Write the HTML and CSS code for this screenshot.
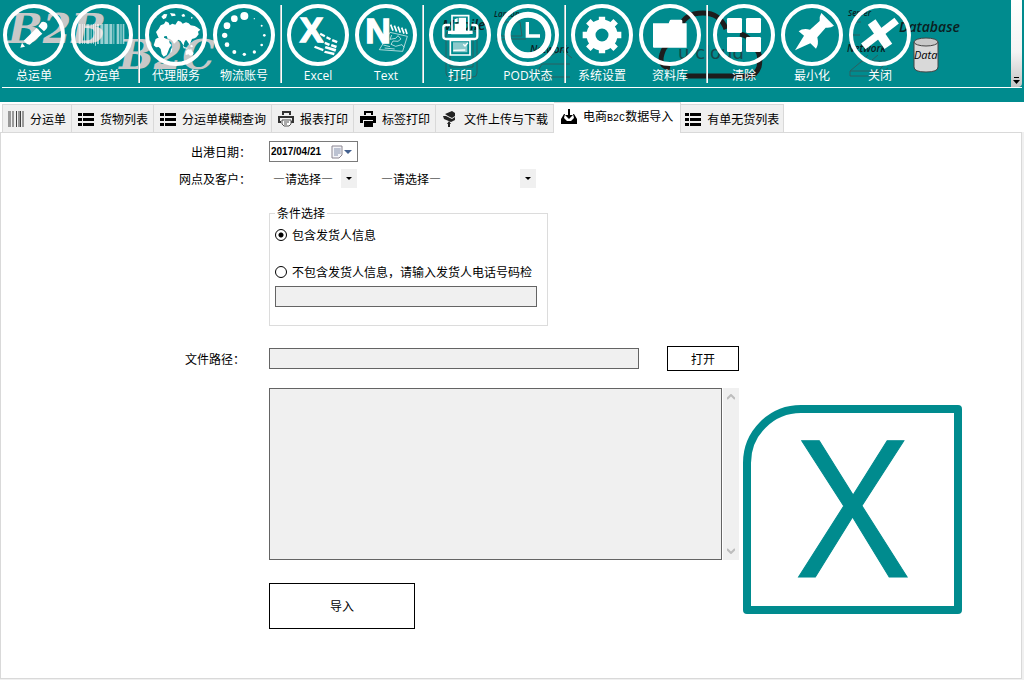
FILE: index.html
```html
<!DOCTYPE html>
<html lang="zh-CN">
  <head>
    <title>电商B2C数据导入</title>
    <meta charset="utf-8">
    <meta name="viewport" content="width=device-width, initial-scale=1">
    <link rel="stylesheet" href="styles.css">
  </head>
  <body>
    <header class="header">
      <!-- Decoration behind the buttons -->
      <svg class="backdrop" width="1024" height="88" viewBox="0 0 1024 88" aria-hidden="true">
        <g class="b2b">
          <text x="8" y="43">B2B</text>
          <text x="119" y="69">B2C</text>
        </g>
        <g class="sketch">
          <path d="M446 35q0-4 4-4h24q3 0 3 4v38q0 4-4 4h-23q-4 0-4-4zM450 39h23v28h-23z" />
          <path d="M500 22h20l2 14h-24zM496 39h30M548 57l14-7 10 8M536 74l6-10h28M540 77h30" />
          <path d="M853 22h8M852 35h8M860 63l8-8M872 60l6-5M850 71l12-10h26l-10 10zM850 71v5h28v-5M878 76l10-8" />
        </g>
        <g class="hand">
          <text class="hand-md" x="442" y="30">Mobile</text>
          <text class="hand-xs" x="494" y="17">Laptop</text>
          <text class="hand-sm" x="530" y="53">Network</text>
          <text class="hand-xs" x="848" y="16">Server</text>
          <text class="hand-sm" x="847" y="52">Network</text>
          <text class="hand-md" x="899" y="32">Database</text>
        </g>
        <path class="cloud" d="M686 76h62q8 0 11-9 3-14-5-20M740 34q7 1 10 7M670 68q-12-2-8-14 2-8 8-10M680 28q4-15 23-15 17 0 23 16" />
        <text class="cloud-text" x="678" y="59">u cloud</text>
        <path d="M914 42v25q0 5 12 5t12-5v-25z" fill="#d9d9d9" stroke="#444" />
        <ellipse cx="926" cy="42" rx="12" ry="4" fill="#c9c9c9" stroke="#444" />
        <text class="hand-data" x="914" y="59">Data</text>
      </svg>

      <nav class="toolbar">
        <button class="tool" type="button">
          <svg viewBox="21 24 162 162"><path d="M61 143l5-15 9 12zM71 122l39-38 17 17-38 33-8-2zM115 79l10-13q11-2 15 4 5 10-1 17l-7 7z" /></svg>
          <span>总运单</span>
        </button>
        <button class="tool" type="button">
          <svg viewBox="225 24 162 162"><path opacity=".6" d="M236 72h6v60h-6zM246 72h3v60h-3zM252 72h3v60h-3zM259 72h9v60h-9zM272 72h3v60h-3zM279 72h3v60h-3zM285 72h3v65h-3zM291 72h6v60h-6zM301 72h9v60h-9zM313 72h12v60h-12zM328 72h9v60h-9zM340 72h3v60h-3zM350 72h8v60h-8zM361 72h4v60h-4zM368 72h5v60h-5z" /></svg>
          <span>分运单</span>
        </button>
        <span class="divider"></span>
        <button class="tool" type="button">
          <svg viewBox="447 24 162 162"><path d="M484 50l8-8 10 1-4 11-8 4zM510 39l15 2 2 6-12 2zM462 52l8-5-2 7zM544 45l8-4 4 8-8 2zM573 50l6 3-5 4zM468 96l8-10 6-10 10-4 5-8 9 4 3 8 8-5 9 3 8-12 9 3 5 6 10-4 8 3 6 6 12 2 7 4 10 7-7 6 2 8-7 9-5 3-8 2-4 10-3 8-8-12-3-4-5 8-2 10-9-14-7-4-7 7-6 5-5-9-7-5-7-1-3-8-7 1-2 8-6-3-3 5-5-3zM467 117l10-5 12-1 9 5 9 5 2 9 6 5-7 10-4 10-4 10-9 5-6-8-3-15-6-6-8 1-7-6zM513 147l4-3-2 12-4 3zM557 154l7-6 7 1 2-4 3 8 5 6-3 7-8 1-4-4-9 2zM548 136l6 6 8 1v3l-11-1zM570 137l6-3 3 6-6 2zM584 166l6 3-5 4zM582 108l3-9 3 6-3 7z" /></svg>
          <span>代理服务</span>
        </button>
        <button class="tool" type="button">
          <svg viewBox="651 24 162 162">
            <circle cx="733" cy="48" r="12" /><circle cx="703" cy="56" r="10" /><circle cx="681" cy="77" r="10" />
            <circle cx="674" cy="106" r="8" /><circle cx="681" cy="134" r="7" /><circle cx="703" cy="156" r="6" />
            <circle cx="733" cy="163" r="5" /><circle cx="763" cy="156" r="5" /><circle cx="785" cy="135" r="4" />
            <circle cx="793" cy="106" r="4" /><circle cx="785" cy="77" r="3" /><circle cx="763" cy="56" r="2" />
          </svg>
          <span>物流账号</span>
        </button>
        <span class="divider"></span>
        <button class="tool" type="button">
          <svg viewBox="33 24 162 162">
            <text class="icon-letter" x="59" y="126">X</text>
            <path d="M122 98l14 8-3 6-14-8zM141 109l12 6-3 6-12-6zM158 117l15 6-3 7-15-6zM116 116l14 7-3 7-14-7zM136 125l14 6-3 7-14-6zM155 132l16 5-3 8-16-6zM105 137l26 10-2 7-27-11zM137 138l32 9-3 8-32-10zM135 152l29 6-2 8-30-8z" />
          </svg>
          <span>Excel</span>
        </button>
        <button class="tool" type="button">
          <svg viewBox="237 24 162 162">
            <text class="icon-letter" x="256" y="130">N</text>
            <path class="line" d="M332 74l7 18M343 77l7 18M354 80l7 18M365 83l7 18M376 86l5 16" stroke-width="5" />
            <path class="line" d="M330 97l52 12-14 45-70-5zM335 105l-5 13 17-3 7-8 9 10-9 7-15-1-6 10 14 6 19-5 6 8M310 135l20 5M314 144l30 3" stroke-width="2" />
          </svg>
          <span>Text</span>
        </button>
        <span class="divider"></span>
        <button class="tool" type="button">
          <svg viewBox="459 24 162 162">
            <path class="line" d="M510 75h-12q-8 0-8 8v26q0 8 8 8h86q8 0 8-8v-26q0-8-8-8h-10" stroke-width="7" />
            <path class="line" d="M516 100v-53h50v53z" stroke-width="5" />
            <path d="M524 58l9-4v12h-9zM536 53h22v44h-34v-26h12zM504 92h74v10h-74z" />
            <path class="line" d="M511 121v44h59v-44z" stroke-width="5" />
            <path d="M519 127h43v30h-43z" opacity=".55" />
            <path class="line" d="M550 133l5 5 9-10M520 151l36-1" stroke-width="4" />
          </svg>
          <span>打印</span>
        </button>
        <button class="tool" type="button">
          <svg viewBox="663 24 162 162">
            <circle class="line" cx="744" cy="105" r="61" stroke-width="18" />
            <path class="line" d="M742 66v42h38" stroke-width="10" />
          </svg>
          <span>POD状态</span>
        </button>
        <span class="divider"></span>
        <button class="tool" type="button">
          <svg viewBox="45 24 162 162">
            <circle class="line" cx="126" cy="105" r="33" stroke-width="27" />
            <path class="line" d="M126 50v16M126 144v16M68 105h18M166 105h18M85 64l14 14M153 132l14 14M167 64l-14 14M99 132l-14 14" stroke-width="19" />
          </svg>
          <span>系统设置</span>
        </button>
        <button class="tool" type="button">
          <svg viewBox="249 24 162 162"><path d="M279 70h47l3-8q1-3 4-3h30q4 0 4 4v7h13v73h-98q-3 0-3-3z" /></svg>
          <span>资料库</span>
        </button>
        <span class="divider"></span>
        <button class="tool" type="button">
          <svg viewBox="471 24 162 162">
            <rect x="501" y="54" width="45" height="45" rx="4" /><rect x="558" y="54" width="45" height="45" rx="4" />
            <rect x="501" y="111" width="45" height="45" rx="4" /><rect x="558" y="111" width="45" height="45" rx="4" />
          </svg>
          <span>清除</span>
        </button>
        <button class="tool" type="button">
          <svg viewBox="15 24 162 162"><path d="M45 151l27-44-16-13q12-10 34-5l29-26q-2-12 5-24l38 38q-10 8-25 6l-25 29q5 22-4 34l-17-16z" /></svg>
          <span>最小化</span>
        </button>
        <button class="tool" type="button">
          <svg viewBox="219 24 162 162">
            <path class="line" d="M250 139l100-77" stroke-width="22" />
            <path class="line" d="M275 66l50 73" stroke-width="28" />
          </svg>
          <span>关闭</span>
        </button>
        <button class="more" type="button" aria-label="更多">
          <svg width="7" height="7" viewBox="0 0 7 7"><path d="M1 0h5v1h-5zM0 3h7l-3.500 4z" /></svg>
        </button>
      </nav>
    </header>

    <nav class="tabs">
      <a class="tab" href="#">
        <svg viewBox="0 0 16 16"><path fill="#999" d="M0 0h3v16h-3zM4 0h2v16h-2zM10 0h2v16h-2zM14 0h2v16h-2z" /><path fill="#444" d="M8 0h1v16h-1zM12 0h1v16h-1z" /></svg>
        分运单
      </a>
      <a class="tab" href="#">
        <svg viewBox="0 0 16 16"><path d="M0 2h4v3h-4zM5 2h11v3h-11zM0 7h4v3h-4zM5 7h11v3h-11zM0 12h4v3h-4zM5 12h11v3h-11z" /></svg>
        货物列表
      </a>
      <a class="tab" href="#">
        <svg viewBox="0 0 16 16"><path d="M0 2h4v3h-4zM5 2h11v3h-11zM0 7h4v3h-4zM5 7h11v3h-11zM0 12h4v3h-4zM5 12h11v3h-11z" /></svg>
        分运单模糊查询
      </a>
      <a class="tab" href="#">
        <svg viewBox="0 0 16 16"><path fill="none" stroke="#333" stroke-width="2" d="M5 4v-3h7v3M3 11h-2v-5h14v5h-2" /><path fill="#fff" stroke="#555" d="M4 9h9v4l-2 2h-5l-2-2zM6 11h5M6 13h3" /></svg>
        报表打印
      </a>
      <a class="tab" href="#">
        <svg viewBox="0 0 16 16"><path d="M4 0h9v4h-2v-2h-5v2h-2zM0 5h16v7h-3v-3h-10v3h-3zM4 10h9v6h-9z" /></svg>
        标签打印
      </a>
      <a class="tab" href="#">
        <svg viewBox="0 0 16 16"><path fill="#222" d="M3 3l7-3 3 2v3l-3 2-4-2zM1 5l3 0 6 3 3-2v3l-4 2-7-3zM7 10l2 3h-1v3h-2v-3h-1z" /></svg>
        文件上传与下载
      </a>
      <a class="tab tab-active" href="#">
        <svg viewBox="0 0 16 16"><path d="M7 0h2v6h3l-4 4-4-4h3zM3 5l-3 5v5h16v-5l-3-5h-1l1 4-3 3h-4l-3-3 1-4z" /></svg>
        <span>电商<span class="latin">B2C</span>数据导入</span>
      </a>
      <a class="tab" href="#">
        <svg viewBox="0 0 16 16"><path d="M0 2h4v3h-4zM5 2h11v3h-11zM0 7h4v3h-4zM5 7h11v3h-11zM0 12h4v3h-4zM5 12h11v3h-11z" /></svg>
        有单无货列表
      </a>
    </nav>

    <main class="panel">
      <form class="import-form">
        <div class="row">
          <label for="date">出港日期：</label>
          <div class="date">
            <input type="text" id="date" value="2017/04/21">
            <svg width="22" height="14" viewBox="0 0 22 14" aria-hidden="true">
              <path d="M1 1h10v9l-3 3h-7z" fill="#f4f4f8" stroke="#8a8590" />
              <path d="M3 4h7M3 6h7M3 8h7M3 10h4M4 3v8M6 3v8M8 3v6" stroke="#a9b1c4" />
              <path d="M13 5h8l-4 4z" fill="#43608f" />
            </svg>
          </div>
        </div>
        <div class="row">
          <label for="site">网点及客户：</label>
          <div class="combo combo-site">
            <select id="site"><option>—请选择—</option></select>
          </div>
          <div class="combo combo-customer">
            <select id="customer" aria-label="客户"><option>—请选择—</option></select>
          </div>
        </div>

        <fieldset class="condition">
          <legend>条件选择</legend>
          <label class="choice"><input type="radio" name="sender" checked>包含发货人信息</label>
          <label class="choice"><input type="radio" name="sender">不包含发货人信息，请输入发货人电话号码检</label>
          <input class="box" type="text" id="phone" aria-label="发货人电话号码">
        </fieldset>

        <div class="row row-file">
          <label for="path">文件路径：</label>
          <input class="box" type="text" id="path">
          <button class="btn btn-open" type="button">打开</button>
        </div>

        <div class="output">
          <div>
            <div class="log">
              <textarea class="box" id="log" aria-label="导入结果"></textarea>
              <div class="scrollbar">
                <svg width="8" height="6" viewBox="0 0 8 6"><path d="M0 5l4-4 4 4" /></svg>
                <svg width="8" height="6" viewBox="0 0 8 6"><path d="M0 1l4 4 4-4" /></svg>
              </div>
            </div>
            <button class="btn btn-import" type="button">导入</button>
          </div>
          <svg class="logo" width="219" height="209" viewBox="0 0 219 209" role="img" aria-label="Excel">
            <path d="M4 58a54 54 0 0 1 54-54h157v201h-211z" />
            <text x="110" y="172">X</text>
          </svg>
        </div>
      </form>
    </main>
  </body>
</html>
```
FILE: styles.css
```css
* {
  box-sizing: border-box;
}

body {
  display: flex;
  flex-direction: column;
  min-height: 100vh;
  margin: 0;
  background: #f0f0f0;
  color: black;
  font: 12px/16px "Noto Sans CJK SC", sans-serif;
}

button,
input,
select,
textarea {
  margin: 0;
  color: inherit;
  font: inherit;
}

/* header */
.header {
  position: relative;
  height: 102px;
  padding: 0 2px;
  background: #008b8e;
  overflow: hidden;
}

.backdrop {
  position: absolute;
  top: 0;
  left: 0;
}

.b2b {
  fill: #c8c8c8;
  font: italic bold 41px "DejaVu Serif", serif;
}

.sketch {
  fill: none;
  stroke: #2c5f60;
}

.hand {
  fill: #0b2022;
  font-family: "Open Sans", sans-serif;
  font-style: italic;
  font-weight: 600;
}

.hand-md {
  font-size: 14px;
}

.hand-sm {
  font-size: 10px;
}

.hand-xs {
  font-size: 8px;
}

.hand-data {
  font: italic 11px "Open Sans", sans-serif;
}

.cloud {
  fill: none;
  stroke: #1d1d1d;
  stroke-width: 5;
}

.cloud-text {
  fill: #17484a;
  font: 18px "DejaVu Sans", sans-serif;
}

.toolbar {
  position: relative;
  display: flex;
  gap: 4px;
  height: 88px;
  border-bottom: 1px solid white;
}

.tool {
  display: flex;
  flex-direction: column;
  align-items: center;
  gap: 2px;
  width: 64px;
  padding: 4px 0 0;
  border: 0;
  background: none;
  color: white;
  font: 12px/16px "Open Sans", "Noto Sans CJK SC", sans-serif;
  white-space: nowrap;
  cursor: pointer;
}

.tool svg {
  width: 62px;
  height: 62px;
  border: 4px solid white;
  border-radius: 50%;
  fill: white;
}

.tool .line {
  fill: none;
  stroke: white;
}

.icon-letter {
  font: bold 106px "Liberation Sans", sans-serif;
  stroke: white;
  stroke-width: 4;
}

.divider {
  width: 2px;
  height: 78px;
  margin-top: 5px;
  border-left: 1px solid #b5c9c9;
  background: white;
}

.more {
  display: flex;
  align-items: flex-end;
  justify-content: center;
  width: 11px;
  margin-left: auto;
  padding: 0 0 3px;
  border: 0;
  border-radius: 0 0 4px 0;
  background: linear-gradient(#fff, #f4f4f4 60%, #c4c4c4);
}

/* tabs */
.tabs {
  display: flex;
  align-items: flex-end;
  height: 30px;
  padding-left: 2px;
  background: white;
}

.tab {
  display: flex;
  align-items: center;
  gap: 6px;
  height: 28px;
  padding: 0 5px 0 6px;
  border: 1px solid #d9d9d9;
  border-width: 1px 1px 0 0;
  background: #f0f0f0;
  color: black;
  text-decoration: none;
  white-space: nowrap;
}

.tab:first-child {
  padding-left: 5px;
  border-left-width: 1px;
}

.tab:last-child {
  padding: 0 4px;
}

.tab svg {
  width: 16px;
  height: 16px;
}

.tab-active {
  z-index: 1;
  height: 31px;
  margin-bottom: -1px;
  padding: 0 7px 2px;
  background: white;
}

.latin {
  font: 10px/16px "Liberation Mono", monospace;
}

/* form */
.panel {
  flex: 1;
  margin: 0 2px 1px 0;
  padding: 8px 0;
  border: 1px solid #d9d9d9;
  background: white;
}

.row {
  display: flex;
  align-items: center;
  margin-bottom: 7px;
}

.row > label {
  width: 250px;
  margin-right: 18px;
  text-align: right;
}

.date {
  display: flex;
  align-items: center;
  width: 89px;
  height: 21px;
  border: 1px solid #7a7a7a;
}

.date input {
  width: 61px;
  padding: 0 1px;
  border: 0;
  font: bold 10px/16px "Liberation Sans", sans-serif;
}

.combo {
  position: relative;
  height: 19px;
}

.combo-site {
  width: 88px;
  margin-right: 20px;
}

.combo-customer {
  width: 159px;
}

.combo select {
  width: 100%;
  height: 19px;
  padding: 0 4px;
  border: 0;
  background: linear-gradient(#f0f0f0, #f0f0f0) right / 16px 19px no-repeat;
  appearance: none;
}

.combo::after {
  content: "";
  position: absolute;
  top: 8px;
  right: 5px;
  border: 3px solid transparent;
  border-top-color: black;
  border-bottom: 0;
  pointer-events: none;
}

.box {
  height: 21px;
  border: 1px solid #646464;
  background: #f0f0f0;
}

.condition {
  width: 279px;
  margin: 18px 0 20px 268px;
  padding: 7px 5px 18px;
  border: 1px solid #dcdcdc;
}

.condition legend {
  padding: 0 2px;
  line-height: 14px;
}

.condition .box {
  display: block;
  width: 262px;
}

.choice {
  display: flex;
  align-items: center;
  gap: 5px;
  height: 16px;
  margin-bottom: 21px;
  white-space: nowrap;
}

.choice + .choice {
  margin-bottom: 6px;
}

.choice input {
  width: 12px;
  height: 12px;
  border: 1px solid black;
  border-radius: 50%;
  appearance: none;
}

.choice input:checked {
  background: radial-gradient(circle, black 2px, white 3px);
}

.row-file {
  margin-bottom: 17px;
}

.row-file > label {
  width: 244px;
  margin-right: 24px;
}

.row-file .box {
  width: 370px;
  margin-right: 28px;
}

.btn {
  padding: 0;
  border: 1px solid black;
  background: white;
  cursor: pointer;
}

.btn-open {
  width: 72px;
  height: 25px;
}

.output {
  display: flex;
  gap: 4px;
  margin-left: 268px;
}

.log {
  display: flex;
  gap: 1px;
  margin-bottom: 23px;
}

.log textarea {
  width: 453px;
  height: 172px;
  resize: none;
}

.scrollbar {
  display: flex;
  flex-direction: column;
  align-items: center;
  justify-content: space-between;
  width: 16px;
  padding: 6px 0;
  background: #f0f0f0;
}

.scrollbar path {
  fill: none;
  stroke: #bdbdbd;
  stroke-width: 2;
}

.btn-import {
  width: 146px;
  height: 46px;
}

.logo {
  margin-top: 17px;
  overflow: visible;
}

.logo path {
  fill: none;
  stroke: #008b8e;
  stroke-width: 8;
  stroke-linejoin: round;
}

.logo text {
  fill: #008b8e;
  stroke: #008b8e;
  font: 190px "Open Sans", sans-serif;
  text-anchor: middle;
}
```
